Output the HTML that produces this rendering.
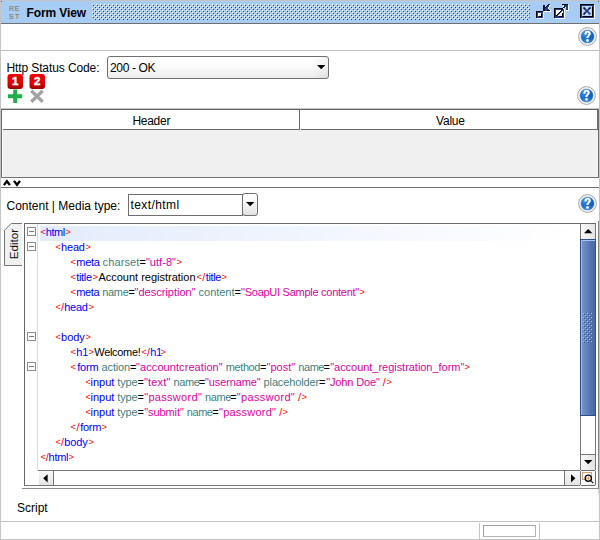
<!DOCTYPE html>
<html>
<head>
<meta charset="utf-8">
<title>Form View</title>
<style>
html,body{margin:0;padding:0;}
body{width:600px;height:540px;overflow:hidden;background:#fff;position:relative;font-family:"Liberation Sans",sans-serif;font-size:12px;color:#000;}
.a{position:absolute;}
.hl{position:absolute;height:1px;}
.vl{position:absolute;width:1px;}
.t{position:absolute;white-space:pre;line-height:14px;}
.code{position:absolute;left:40px;white-space:pre;font-size:11px;line-height:15px;height:15px;letter-spacing:0px;}
.cl{position:absolute;left:0;width:580px;height:15px;font-size:11px;line-height:15px;white-space:pre;}
.cl span{position:absolute;top:0;}
.cl i{display:inline-block;font-style:normal;transform:scale(0.84,0.8);transform-origin:50% 49%;}
.r{color:#ff0000;}
.b{color:#0000ff;}
.at{color:#3f7f7f;}
.v{color:#dd00a4;}
.k{color:#000;}
.fold{position:absolute;left:27px;width:7px;height:7px;border:1px solid #8c8c8c;background:#fff;}
.fold:after{content:"";position:absolute;left:1px;top:3px;width:5px;height:1px;background:#7a7a7a;}
</style>
</head>
<body>
<!-- window borders -->
<div class="a" style="left:0;top:0;width:600px;height:1px;background:#c4c4c4;"></div>
<div class="a" style="left:0;top:0;width:1px;height:540px;background:#c4c4c4;"></div>
<div class="a" style="left:599px;top:0;width:1px;height:540px;background:#c4c4c4;"></div>
<div class="a" style="left:0;top:539px;width:600px;height:1px;background:#c4c4c4;"></div>

<!-- title bar -->
<div class="a" id="titlebar" style="left:1px;top:1px;width:598px;height:22px;background:#a8cdf5;"></div>
<div class="hl" style="left:1px;top:23px;width:598px;background:#707070;"></div>
<div class="a" style="left:1px;top:1px;width:1px;height:1px;background:#4d5b6d;"></div><div class="a" style="left:598px;top:1px;width:1px;height:1px;background:#4d5b6d;"></div>
<svg class="a" style="left:92px;top:4px;" width="438" height="16" shape-rendering="crispEdges">
<defs><pattern id="dots" x="0" y="0" width="4" height="4" patternUnits="userSpaceOnUse">
<rect x="0" y="0" width="1" height="1" fill="#ffffff"/><rect x="1" y="1" width="1" height="1" fill="#233f8f"/>
<rect x="2" y="2" width="1" height="1" fill="#ffffff"/><rect x="3" y="3" width="1" height="1" fill="#233f8f"/>
</pattern></defs>
<rect x="0" y="0" width="438" height="16" fill="url(#dots)"/>
</svg>
<div class="t" id="ttl" style="left:26.5px;top:6px;letter-spacing:-0.1px;font-weight:bold;font-size:12px;">Form View</div>


<!-- REST icon -->
<svg class="a" style="left:8px;top:5px;" width="14" height="15" viewBox="0 0 14 15">
<g font-family="Liberation Sans, sans-serif" font-size="7px" fill="#d2cbc2"><text x="1.6" y="6.4">R</text><text x="7.4" y="6.4">E</text><text x="1.6" y="14.3">S</text><text x="7.6" y="14.3">T</text></g>
<g font-family="Liberation Sans, sans-serif" font-size="7px" fill="#7f7972" stroke="#7f7972" stroke-width="0.15"><text x="0.9" y="5.8">R</text><text x="6.7" y="5.8">E</text><text x="0.9" y="13.7">S</text><text x="6.9" y="13.7">T</text></g>
</svg>

<!-- title buttons -->
<svg class="a" style="left:534px;top:2px;" width="64" height="20" shape-rendering="crispEdges"><rect x="14" y="2" width="1" height="1" fill="#000000"/><rect x="15" y="2" width="1" height="1" fill="#1f3c8e"/><rect x="9" y="3" width="1" height="1" fill="#000000"/><rect x="10" y="3" width="1" height="1" fill="#0d1b47"/><rect x="13" y="3" width="1" height="1" fill="#000000"/><rect x="14" y="3" width="1" height="1" fill="#1f3c8e"/><rect x="15" y="3" width="1" height="1" fill="#ffffff"/><rect x="9" y="4" width="1" height="1" fill="#000000"/><rect x="10" y="4" width="1" height="1" fill="#0d1b47"/><rect x="11" y="4" width="1" height="1" fill="#d9e9fb"/><rect x="12" y="4" width="1" height="1" fill="#000000"/><rect x="13" y="4" width="2" height="1" fill="#1f3c8e"/><rect x="15" y="4" width="1" height="1" fill="#ffffff"/><rect x="9" y="5" width="1" height="1" fill="#000000"/><rect x="10" y="5" width="1" height="1" fill="#0d1b47"/><rect x="11" y="5" width="1" height="1" fill="#000000"/><rect x="12" y="5" width="2" height="1" fill="#1f3c8e"/><rect x="14" y="5" width="1" height="1" fill="#ffffff"/><rect x="9" y="6" width="1" height="1" fill="#000000"/><rect x="10" y="6" width="1" height="1" fill="#0d1b47"/><rect x="11" y="6" width="3" height="1" fill="#1f3c8e"/><rect x="14" y="6" width="1" height="1" fill="#ffffff"/><rect x="9" y="7" width="1" height="1" fill="#000000"/><rect x="10" y="7" width="1" height="1" fill="#0d1b47"/><rect x="11" y="7" width="4" height="1" fill="#1f3c8e"/><rect x="15" y="7" width="1" height="1" fill="#ffffff"/><rect x="9" y="8" width="2" height="1" fill="#000000"/><rect x="11" y="8" width="2" height="1" fill="#1f3c8e"/><rect x="13" y="8" width="3" height="1" fill="#000000"/><rect x="16" y="8" width="1" height="1" fill="#ffffff"/><rect x="2" y="9" width="7" height="1" fill="#000000"/><rect x="10" y="9" width="7" height="1" fill="#ffffff"/><rect x="2" y="10" width="1" height="1" fill="#000000"/><rect x="3" y="10" width="6" height="1" fill="#1f3c8e"/><rect x="9" y="10" width="1" height="1" fill="#ffffff"/><rect x="2" y="11" width="1" height="1" fill="#000000"/><rect x="3" y="11" width="1" height="1" fill="#1f3c8e"/><rect x="4" y="11" width="3" height="1" fill="#ffffff"/><rect x="7" y="11" width="2" height="1" fill="#1f3c8e"/><rect x="9" y="11" width="1" height="1" fill="#ffffff"/><rect x="2" y="12" width="1" height="1" fill="#000000"/><rect x="3" y="12" width="1" height="1" fill="#1f3c8e"/><rect x="4" y="12" width="1" height="1" fill="#ffffff"/><rect x="5" y="12" width="1" height="1" fill="#b7d5f7"/><rect x="6" y="12" width="1" height="1" fill="#ffffff"/><rect x="7" y="12" width="1" height="1" fill="#000000"/><rect x="8" y="12" width="1" height="1" fill="#1f3c8e"/><rect x="9" y="12" width="1" height="1" fill="#ffffff"/><rect x="2" y="13" width="1" height="1" fill="#000000"/><rect x="3" y="13" width="1" height="1" fill="#1f3c8e"/><rect x="4" y="13" width="3" height="1" fill="#ffffff"/><rect x="7" y="13" width="1" height="1" fill="#000000"/><rect x="8" y="13" width="1" height="1" fill="#1f3c8e"/><rect x="9" y="13" width="1" height="1" fill="#ffffff"/><rect x="2" y="14" width="1" height="1" fill="#000000"/><rect x="3" y="14" width="2" height="1" fill="#1f3c8e"/><rect x="5" y="14" width="3" height="1" fill="#000000"/><rect x="8" y="14" width="1" height="1" fill="#1f3c8e"/><rect x="9" y="14" width="1" height="1" fill="#ffffff"/><rect x="2" y="15" width="1" height="1" fill="#000000"/><rect x="3" y="15" width="6" height="1" fill="#1f3c8e"/><rect x="9" y="15" width="1" height="1" fill="#ffffff"/><rect x="3" y="16" width="7" height="1" fill="#ffffff"/><rect x="28" y="2" width="6" height="1" fill="#000000"/><rect x="29" y="3" width="1" height="1" fill="#d9e9fb"/><rect x="30" y="3" width="4" height="1" fill="#1f3c8e"/><rect x="34" y="3" width="1" height="1" fill="#ffffff"/><rect x="29" y="4" width="1" height="1" fill="#ffffff"/><rect x="30" y="4" width="1" height="1" fill="#000000"/><rect x="31" y="4" width="3" height="1" fill="#1f3c8e"/><rect x="34" y="4" width="1" height="1" fill="#ffffff"/><rect x="29" y="5" width="1" height="1" fill="#000000"/><rect x="30" y="5" width="1" height="1" fill="#1f3c8e"/><rect x="31" y="5" width="1" height="1" fill="#ffffff"/><rect x="32" y="5" width="2" height="1" fill="#1f3c8e"/><rect x="34" y="5" width="1" height="1" fill="#ffffff"/><rect x="20" y="6" width="9" height="1" fill="#000000"/><rect x="29" y="6" width="1" height="1" fill="#ffffff"/><rect x="32" y="6" width="2" height="1" fill="#1f3c8e"/><rect x="34" y="6" width="1" height="1" fill="#ffffff"/><rect x="20" y="7" width="1" height="1" fill="#000000"/><rect x="21" y="7" width="7" height="1" fill="#1f3c8e"/><rect x="28" y="7" width="1" height="1" fill="#000000"/><rect x="29" y="7" width="1" height="1" fill="#1f3c8e"/><rect x="30" y="7" width="1" height="1" fill="#ffffff"/><rect x="32" y="7" width="2" height="1" fill="#1f3c8e"/><rect x="34" y="7" width="1" height="1" fill="#ffffff"/><rect x="20" y="8" width="1" height="1" fill="#000000"/><rect x="21" y="8" width="1" height="1" fill="#1f3c8e"/><rect x="22" y="8" width="5" height="1" fill="#ffffff"/><rect x="27" y="8" width="1" height="1" fill="#000000"/><rect x="28" y="8" width="2" height="1" fill="#1f3c8e"/><rect x="30" y="8" width="1" height="1" fill="#ffffff"/><rect x="32" y="8" width="3" height="1" fill="#ffffff"/><rect x="20" y="9" width="1" height="1" fill="#000000"/><rect x="21" y="9" width="1" height="1" fill="#1f3c8e"/><rect x="22" y="9" width="4" height="1" fill="#ffffff"/><rect x="26" y="9" width="1" height="1" fill="#000000"/><rect x="27" y="9" width="1" height="1" fill="#1f3c8e"/><rect x="28" y="9" width="1" height="1" fill="#ffffff"/><rect x="29" y="9" width="1" height="1" fill="#1f3c8e"/><rect x="30" y="9" width="1" height="1" fill="#ffffff"/><rect x="20" y="10" width="1" height="1" fill="#000000"/><rect x="21" y="10" width="1" height="1" fill="#1f3c8e"/><rect x="22" y="10" width="3" height="1" fill="#ffffff"/><rect x="25" y="10" width="1" height="1" fill="#000000"/><rect x="26" y="10" width="1" height="1" fill="#1f3c8e"/><rect x="27" y="10" width="2" height="1" fill="#ffffff"/><rect x="29" y="10" width="1" height="1" fill="#1f3c8e"/><rect x="30" y="10" width="1" height="1" fill="#ffffff"/><rect x="20" y="11" width="1" height="1" fill="#000000"/><rect x="21" y="11" width="1" height="1" fill="#1f3c8e"/><rect x="22" y="11" width="2" height="1" fill="#ffffff"/><rect x="24" y="11" width="1" height="1" fill="#000000"/><rect x="25" y="11" width="1" height="1" fill="#1f3c8e"/><rect x="26" y="11" width="1" height="1" fill="#ffffff"/><rect x="27" y="11" width="1" height="1" fill="#d9e9fb"/><rect x="28" y="11" width="1" height="1" fill="#000000"/><rect x="29" y="11" width="1" height="1" fill="#1f3c8e"/><rect x="30" y="11" width="1" height="1" fill="#ffffff"/><rect x="20" y="12" width="1" height="1" fill="#000000"/><rect x="21" y="12" width="1" height="1" fill="#1f3c8e"/><rect x="22" y="12" width="1" height="1" fill="#ffffff"/><rect x="23" y="12" width="1" height="1" fill="#000000"/><rect x="24" y="12" width="1" height="1" fill="#1f3c8e"/><rect x="25" y="12" width="1" height="1" fill="#ffffff"/><rect x="26" y="12" width="2" height="1" fill="#d9e9fb"/><rect x="28" y="12" width="1" height="1" fill="#000000"/><rect x="29" y="12" width="1" height="1" fill="#1f3c8e"/><rect x="30" y="12" width="1" height="1" fill="#ffffff"/><rect x="20" y="13" width="1" height="1" fill="#000000"/><rect x="21" y="13" width="1" height="1" fill="#1f3c8e"/><rect x="22" y="13" width="1" height="1" fill="#000000"/><rect x="23" y="13" width="1" height="1" fill="#1f3c8e"/><rect x="24" y="13" width="1" height="1" fill="#ffffff"/><rect x="25" y="13" width="3" height="1" fill="#d9e9fb"/><rect x="28" y="13" width="1" height="1" fill="#000000"/><rect x="29" y="13" width="1" height="1" fill="#1f3c8e"/><rect x="30" y="13" width="1" height="1" fill="#ffffff"/><rect x="20" y="14" width="1" height="1" fill="#000000"/><rect x="21" y="14" width="4" height="1" fill="#1f3c8e"/><rect x="25" y="14" width="4" height="1" fill="#000000"/><rect x="29" y="14" width="1" height="1" fill="#1f3c8e"/><rect x="30" y="14" width="1" height="1" fill="#ffffff"/><rect x="20" y="15" width="1" height="1" fill="#000000"/><rect x="21" y="15" width="9" height="1" fill="#1f3c8e"/><rect x="30" y="15" width="1" height="1" fill="#ffffff"/><rect x="21" y="16" width="10" height="1" fill="#ffffff"/><rect x="46" y="2" width="14" height="1" fill="#000000"/><rect x="46" y="3" width="1" height="1" fill="#000000"/><rect x="47" y="3" width="13" height="1" fill="#1f3c8e"/><rect x="60" y="3" width="1" height="1" fill="#ffffff"/><rect x="46" y="4" width="1" height="1" fill="#000000"/><rect x="47" y="4" width="1" height="1" fill="#1f3c8e"/><rect x="48" y="4" width="10" height="1" fill="#b7d5f7"/><rect x="58" y="4" width="2" height="1" fill="#1f3c8e"/><rect x="60" y="4" width="1" height="1" fill="#ffffff"/><rect x="46" y="5" width="1" height="1" fill="#000000"/><rect x="47" y="5" width="1" height="1" fill="#1f3c8e"/><rect x="48" y="5" width="10" height="1" fill="#b7d5f7"/><rect x="58" y="5" width="1" height="1" fill="#000000"/><rect x="59" y="5" width="1" height="1" fill="#1f3c8e"/><rect x="60" y="5" width="1" height="1" fill="#ffffff"/><rect x="46" y="6" width="1" height="1" fill="#000000"/><rect x="47" y="6" width="1" height="1" fill="#1f3c8e"/><rect x="48" y="6" width="10" height="1" fill="#b7d5f7"/><rect x="58" y="6" width="1" height="1" fill="#000000"/><rect x="59" y="6" width="1" height="1" fill="#1f3c8e"/><rect x="60" y="6" width="1" height="1" fill="#ffffff"/><rect x="46" y="7" width="1" height="1" fill="#000000"/><rect x="47" y="7" width="1" height="1" fill="#1f3c8e"/><rect x="48" y="7" width="10" height="1" fill="#b7d5f7"/><rect x="58" y="7" width="1" height="1" fill="#000000"/><rect x="59" y="7" width="1" height="1" fill="#1f3c8e"/><rect x="60" y="7" width="1" height="1" fill="#ffffff"/><rect x="46" y="8" width="1" height="1" fill="#000000"/><rect x="47" y="8" width="1" height="1" fill="#1f3c8e"/><rect x="48" y="8" width="10" height="1" fill="#b7d5f7"/><rect x="58" y="8" width="1" height="1" fill="#000000"/><rect x="59" y="8" width="1" height="1" fill="#1f3c8e"/><rect x="60" y="8" width="1" height="1" fill="#ffffff"/><rect x="46" y="9" width="1" height="1" fill="#000000"/><rect x="47" y="9" width="1" height="1" fill="#1f3c8e"/><rect x="48" y="9" width="10" height="1" fill="#b7d5f7"/><rect x="58" y="9" width="1" height="1" fill="#000000"/><rect x="59" y="9" width="1" height="1" fill="#1f3c8e"/><rect x="60" y="9" width="1" height="1" fill="#ffffff"/><rect x="46" y="10" width="1" height="1" fill="#000000"/><rect x="47" y="10" width="1" height="1" fill="#1f3c8e"/><rect x="48" y="10" width="10" height="1" fill="#b7d5f7"/><rect x="58" y="10" width="1" height="1" fill="#000000"/><rect x="59" y="10" width="1" height="1" fill="#1f3c8e"/><rect x="60" y="10" width="1" height="1" fill="#ffffff"/><rect x="46" y="11" width="1" height="1" fill="#000000"/><rect x="47" y="11" width="1" height="1" fill="#1f3c8e"/><rect x="48" y="11" width="10" height="1" fill="#b7d5f7"/><rect x="58" y="11" width="1" height="1" fill="#000000"/><rect x="59" y="11" width="1" height="1" fill="#1f3c8e"/><rect x="60" y="11" width="1" height="1" fill="#ffffff"/><rect x="46" y="12" width="1" height="1" fill="#000000"/><rect x="47" y="12" width="1" height="1" fill="#1f3c8e"/><rect x="48" y="12" width="10" height="1" fill="#b7d5f7"/><rect x="58" y="12" width="1" height="1" fill="#000000"/><rect x="59" y="12" width="1" height="1" fill="#1f3c8e"/><rect x="60" y="12" width="1" height="1" fill="#ffffff"/><rect x="46" y="13" width="1" height="1" fill="#000000"/><rect x="47" y="13" width="1" height="1" fill="#1f3c8e"/><rect x="48" y="13" width="10" height="1" fill="#b7d5f7"/><rect x="58" y="13" width="1" height="1" fill="#000000"/><rect x="59" y="13" width="1" height="1" fill="#1f3c8e"/><rect x="60" y="13" width="1" height="1" fill="#ffffff"/><rect x="46" y="14" width="1" height="1" fill="#000000"/><rect x="47" y="14" width="2" height="1" fill="#1f3c8e"/><rect x="49" y="14" width="10" height="1" fill="#000000"/><rect x="59" y="14" width="1" height="1" fill="#1f3c8e"/><rect x="60" y="14" width="1" height="1" fill="#ffffff"/><rect x="46" y="15" width="1" height="1" fill="#000000"/><rect x="47" y="15" width="13" height="1" fill="#1f3c8e"/><rect x="60" y="15" width="1" height="1" fill="#ffffff"/><rect x="47" y="16" width="14" height="1" fill="#ffffff"/></svg>
<svg class="a" style="left:582px;top:6px;" width="10" height="10" viewBox="0 0 10 10"><path d="M2.6 2.6 L7.4 7.4 M7.6 2.4 L2.4 7.6" stroke="#fff" stroke-width="1.6" fill="none" transform="translate(0.9,0.5)" opacity="0.9"/><path d="M1.7 1.7 L8.3 8.3 M8.3 1.7 L1.7 8.3" stroke="#1f3c8e" stroke-width="1.9" fill="none"/><path d="M1.5 1.5 L3 3 M8.5 1.5 L7 3 M1.5 8.5 L3 7" stroke="#000" stroke-width="1.1" fill="none" opacity="0.8"/><rect x="4" y="4" width="2" height="2" fill="#1f3c8e"/></svg>

<!-- section lines -->
<div class="hl" style="left:1px;top:50px;width:598px;background:#c0c0c0;"></div>
<div class="hl" style="left:1px;top:187px;width:598px;background:#737373;"></div>
<div class="hl" style="left:1px;top:521px;width:598px;background:#c4c4c4;"></div>


<!-- help icons -->
<svg width="0" height="0" style="position:absolute"><defs>
<radialGradient id="hg" cx="0.35" cy="0.25" r="0.9"><stop offset="0" stop-color="#4a9cec"/><stop offset="0.55" stop-color="#1565c0"/><stop offset="1" stop-color="#0a4a9a"/></radialGradient>
<linearGradient id="hg2" x1="0" y1="0" x2="0" y2="1"><stop offset="0.55" stop-color="#2a7fd8" stop-opacity="0"/><stop offset="1" stop-color="#4aa0ee" stop-opacity="0.9"/></linearGradient>
<g id="help"><circle cx="9.5" cy="9.5" r="8.9" fill="#ececec" stroke="#a6a6a6" stroke-width="1"/><circle cx="9.5" cy="9.5" r="7.5" fill="none" stroke="#f8f8f8" stroke-width="0.9"/><circle cx="9.5" cy="9.5" r="6.6" fill="url(#hg)" stroke="#6f9bd2" stroke-width="0.5"/><circle cx="9.5" cy="9.5" r="6.4" fill="url(#hg2)"/>
<g transform="translate(9.5,9.3) scale(1.12) translate(-9.5,-9.3)"><path d="M6.8 7.6 C6.8 5.3 8.1 4.4 9.6 4.4 C11.3 4.4 12.4 5.4 12.4 6.9 C12.4 8.1 11.7 8.7 11 9.3 C10.5 9.8 10.4 10.1 10.4 10.9 L8.6 10.9 C8.6 9.8 8.8 9.3 9.5 8.7 C10.1 8.1 10.4 7.7 10.4 7 C10.4 6.4 10.1 6 9.6 6 C9 6 8.7 6.5 8.7 7.6 Z" fill="#fff"/><circle cx="9.5" cy="13" r="1.2" fill="#fff"/></g></g>
</defs></svg>
<svg class="a" style="left:578px;top:27px;" width="19" height="19"><use href="#help"/></svg>
<svg class="a" style="left:577px;top:86px;" width="19" height="19"><use href="#help"/></svg>
<svg class="a" style="left:578px;top:194px;" width="19" height="19"><use href="#help"/></svg>

<!-- status combobox -->
<div class="a" style="left:107px;top:56px;width:220px;height:21px;border:1px solid #707070;border-radius:3px;background:linear-gradient(90deg,rgba(0,0,0,0) 92%,rgba(0,0,0,0.045) 100%),linear-gradient(#ffffff 0%,#fbfbfb 45%,#ececec 100%);"></div>
<div class="t" id="cb1" style="left:110px;top:61px;letter-spacing:-0.35px;">200 - OK</div>
<svg class="a" style="left:317px;top:65px;" width="9" height="5"><path d="M0 0 L8.4 0 L4.2 4.3 Z" fill="#000"/></svg>

<!-- badges -->
<svg width="0" height="0" style="position:absolute"><defs>
<linearGradient id="bg" x1="0" y1="0" x2="0" y2="1"><stop offset="0" stop-color="#ee0202"/><stop offset="0.6" stop-color="#e00000"/><stop offset="0.8" stop-color="#c00000"/><stop offset="1" stop-color="#980000"/></linearGradient></defs></svg>
<svg class="a" style="left:7px;top:73.7px;" width="16" height="16"><rect x="0.5" y="0" width="15.5" height="15" rx="3" ry="3" fill="url(#bg)"/><text x="8.1" y="11.1" text-anchor="middle" font-family="Liberation Sans, sans-serif" font-weight="bold" font-size="11.5px" fill="#fff" stroke="#fff" stroke-width="0.45">1</text></svg>
<svg class="a" style="left:29px;top:73.7px;" width="16" height="16"><rect x="0.5" y="0" width="15.5" height="15" rx="3" ry="3" fill="url(#bg)"/><text x="8.1" y="11.1" text-anchor="middle" font-family="Liberation Sans, sans-serif" font-weight="bold" font-size="11.5px" fill="#fff" stroke="#fff" stroke-width="0.45">2</text></svg>

<!-- plus / x -->
<svg class="a" style="left:8px;top:89px;" width="15" height="15"><path d="M5.2 0.4 H9.2 V5.3 H14.2 V9.3 H9.2 V13.9 H5.2 V9.3 H0 V5.3 H5.2 Z" fill="#22ad4b"/></svg>
<svg class="a" style="left:29px;top:89px;" width="16" height="15"><path d="M2.3 1.8 L13.7 12.8 M13.7 1.8 L2.3 12.8" stroke="#a3a3a3" stroke-width="3.3" fill="none"/></svg>

<!-- table -->
<div class="hl" style="left:1px;top:108px;width:598px;background:#c6c6c6;"></div>
<div class="hl" style="left:1px;top:109px;width:598px;background:#646464;"></div>
<div class="vl" style="left:1px;top:109px;height:69px;background:#6a6a6a;"></div>
<div class="vl" style="left:598px;top:109px;height:69px;background:#6e6e6e;"></div>
<div class="a" style="left:3px;top:130px;width:595px;height:47px;background:#f0f0f0;"></div>
<div class="hl" style="left:3px;top:129px;width:297px;background:#6a6a6a;"></div>
<div class="hl" style="left:301px;top:129px;width:297px;background:#6a6a6a;"></div>
<div class="vl" style="left:299px;top:110px;height:20px;background:#6a6a6a;"></div>
<div class="vl" style="left:597px;top:110px;height:20px;background:#6a6a6a;"></div>
<div class="hl" style="left:1px;top:177px;width:598px;background:#707070;"></div>
<div class="t" id="th1" style="left:132.4px;top:114px;letter-spacing:-0.27px;">Header</div>
<div class="t" id="th2" style="left:436px;top:114px;letter-spacing:-0.2px;">Value</div>

<!-- splitter arrows -->
<svg class="a" style="left:3px;top:179px;" width="19" height="8"><path d="M0.9 6.1 L3.9 2.2 L6.9 6.1" stroke="#000" stroke-width="2.3" fill="none" stroke-linejoin="miter"/><path d="M11 1.9 L14 5.8 L17 1.9" stroke="#000" stroke-width="2.3" fill="none" stroke-linejoin="miter"/></svg>

<!-- media type combobox -->
<div class="a" style="left:128px;top:194px;width:113px;height:20px;border:1px solid #6f6f6f;background:#fff;"></div>
<div class="a" style="left:242px;top:193px;width:14px;height:21px;border:1px solid #6f6f6f;border-radius:3px;background:linear-gradient(#ffffff 0%,#f6f6f6 45%,#e2e2e2 100%);"></div>
<svg class="a" style="left:246px;top:202px;" width="9" height="5"><path d="M0 0 L8.4 0 L4.2 4.3 Z" fill="#000"/></svg>
<div class="t" id="cb2" style="left:130.5px;top:198px;letter-spacing:0.4px;">text/html</div>

<!-- editor tab -->
<svg class="a" style="left:3px;top:222px;" width="22" height="45"><path d="M19 1.5 L8.2 1.5 L1.5 8.2 L1.5 43.5 L19 43.5 Z" fill="#f0f0f0" stroke="none"/><path d="M19 1.5 L8.2 1.5 L1.5 8.2 L1.5 43.5 L19 43.5" fill="none" stroke="#757575" stroke-width="1"/></svg>
<div class="a" id="edtab" style="left:4px;top:228px;width:18px;height:34px;"><div style="position:absolute;left:-7.3px;top:9.2px;width:34px;height:14px;line-height:14px;text-align:center;transform:rotate(-90deg);font-size:11.6px;white-space:pre;color:#111;">Editor</div></div>

<!-- editor frame -->
<div class="hl" style="left:24px;top:223px;width:572px;background:#6a6a6a;"></div>
<div class="vl" style="left:24px;top:223px;height:263px;background:#666666;"></div>
<div class="hl" style="left:24px;top:485px;width:572px;background:#767676;"></div>
<div class="vl" style="left:598px;top:221px;height:268px;background:#808080;"></div>
<div class="vl" style="left:598px;top:489px;height:5px;background:#d4d4d4;"></div>
<div class="hl" style="left:22px;top:488px;width:577px;background:#8c8c8c;"></div>
<div class="vl" style="left:37px;top:224px;height:247px;background:#dcdcdc;"></div>
<!-- current line highlight -->
<div class="a" style="left:40px;top:226px;width:540px;height:15px;background:linear-gradient(90deg,#e3ebfb 0%,#ffffff 100%);"></div>
<!--CODE-->
<div class="cl" id="L0" style="top:225px"><span class="r" style="left:39.8px;letter-spacing:-0.424px"><i>&lt;</i></span><span class="b" style="left:45.8px;letter-spacing:-0.450px">html</span><span class="r" style="left:64.6px;letter-spacing:-0.024px"><i>&gt;</i></span></div>
<div class="fold" style="top:227px;"></div>
<div class="cl" id="L1" style="top:240px"><span class="r" style="left:54.7px;letter-spacing:-0.024px"><i>&lt;</i></span><span class="b" style="left:61.1px;letter-spacing:-0.193px">head</span><span class="r" style="left:84.8px;letter-spacing:-0.224px"><i>&gt;</i></span></div>
<div class="fold" style="top:242px;"></div>
<div class="cl" id="L2" style="top:255px"><span class="r" style="left:70.0px;letter-spacing:-0.124px"><i>&lt;</i></span><span class="b" style="left:76.3px;letter-spacing:-0.289px">meta</span><span class="at" style="left:102.6px;letter-spacing:0.104px">charset</span><span class="k" style="left:139.4px;letter-spacing:0.076px">=</span><span class="v" style="left:145.9px;letter-spacing:0.040px">"utf-8"</span><span class="r" style="left:176.0px;letter-spacing:-0.024px"><i>&gt;</i></span></div>
<div class="cl" id="L3" style="top:270px"><span class="r" style="left:70.0px;letter-spacing:-0.224px"><i>&lt;</i></span><span class="b" style="left:76.2px;letter-spacing:-0.304px">title</span><span class="r" style="left:91.8px;letter-spacing:0.176px"><i>&gt;</i></span><span class="k" style="left:98.4px;letter-spacing:-0.006px">Account registration</span><span class="r" style="left:195.5px;letter-spacing:0.410px"><i>&lt;</i>/</span><span class="b" style="left:205.8px;letter-spacing:-0.384px">title</span><span class="r" style="left:221.0px;letter-spacing:-0.424px"><i>&gt;</i></span></div>
<div class="cl" id="L4" style="top:285px"><span class="r" style="left:70.0px;letter-spacing:-0.124px"><i>&lt;</i></span><span class="b" style="left:76.3px;letter-spacing:-0.364px">meta</span><span class="at" style="left:102.3px;letter-spacing:-0.354px">name</span><span class="k" style="left:128.4px;letter-spacing:-0.324px">=</span><span class="v" style="left:134.5px;letter-spacing:0.007px">"description"</span><span class="at" style="left:198.6px;letter-spacing:-0.040px">content</span><span class="k" style="left:234.4px;letter-spacing:0.276px">=</span><span class="v" style="left:241.1px;letter-spacing:-0.265px">"SoapUI Sample content"</span><span class="r" style="left:359.0px;letter-spacing:-0.424px"><i>&gt;</i></span></div>
<div class="cl" id="L5" style="top:300px"><span class="r" style="left:54.5px;letter-spacing:0.160px"><i>&lt;</i>/</span><span class="b" style="left:64.3px;letter-spacing:-0.318px">head</span><span class="r" style="left:87.5px;letter-spacing:0.176px"><i>&gt;</i></span></div>
<div class="cl" id="L7" style="top:330px"><span class="r" style="left:54.7px;letter-spacing:-0.024px"><i>&lt;</i></span><span class="b" style="left:61.1px;letter-spacing:-0.038px">body</span><span class="r" style="left:84.8px;letter-spacing:-0.224px"><i>&gt;</i></span></div>
<div class="fold" style="top:332px;"></div>
<div class="cl" id="L8" style="top:345px"><span class="r" style="left:70.0px;letter-spacing:-0.124px"><i>&lt;</i></span><span class="b" style="left:76.3px;letter-spacing:-0.068px">h1</span><span class="r" style="left:88.4px;letter-spacing:-0.450px"><i>&gt;</i></span><span class="k" style="left:94.3px;letter-spacing:-0.312px">Welcome!</span><span class="r" style="left:140.5px;letter-spacing:0.160px"><i>&lt;</i>/</span><span class="b" style="left:150.3px;letter-spacing:-0.450px">h1</span><span class="r" style="left:160.4px;letter-spacing:-0.424px"><i>&gt;</i></span></div>
<div class="cl" id="L9" style="top:360px"><span class="r" style="left:70.0px;letter-spacing:0.450px"><i>&lt;</i></span><span class="b" style="left:77.2px;letter-spacing:-0.150px">form</span><span class="at" style="left:101.6px;letter-spacing:-0.159px">action</span><span class="k" style="left:130.0px;letter-spacing:-0.324px">=</span><span class="v" style="left:136.1px;letter-spacing:0.072px">"accountcreation"</span><span class="at" style="left:225.8px;letter-spacing:-0.415px">method</span><span class="k" style="left:260.0px;letter-spacing:0.076px">=</span><span class="v" style="left:266.5px;letter-spacing:0.033px">"post"</span><span class="at" style="left:298.3px;letter-spacing:-0.450px">name</span><span class="k" style="left:323.4px;letter-spacing:0.376px">=</span><span class="v" style="left:330.2px;letter-spacing:-0.033px">"account_registration_form"</span><span class="r" style="left:464.3px;letter-spacing:0.450px"><i>&gt;</i></span></div>
<div class="fold" style="top:362px;"></div>
<div class="cl" id="L10" style="top:375px"><span class="r" style="left:85.0px;letter-spacing:-0.450px"><i>&lt;</i></span><span class="b" style="left:90.5px;letter-spacing:-0.011px">input</span><span class="at" style="left:117.3px;letter-spacing:-0.173px">type</span><span class="k" style="left:137.4px;letter-spacing:0.176px">=</span><span class="v" style="left:144.0px;letter-spacing:0.177px">"text"</span><span class="at" style="left:173.6px;letter-spacing:-0.450px">name</span><span class="k" style="left:198.7px;letter-spacing:-0.124px">=</span><span class="v" style="left:205.0px;letter-spacing:-0.112px">"username"</span><span class="at" style="left:263.6px;letter-spacing:-0.134px">placeholder</span><span class="k" style="left:319.0px;letter-spacing:0.450px">=</span><span class="v" style="left:326.2px;letter-spacing:-0.140px">"John Doe"</span><span class="r" style="left:382.7px;letter-spacing:0.010px">/<i>&gt;</i></span></div>
<div class="cl" id="L11" style="top:390px"><span class="r" style="left:85.0px;letter-spacing:-0.450px"><i>&lt;</i></span><span class="b" style="left:90.5px;letter-spacing:-0.011px">input</span><span class="at" style="left:117.3px;letter-spacing:-0.173px">type</span><span class="k" style="left:137.4px;letter-spacing:0.376px">=</span><span class="v" style="left:144.2px;letter-spacing:0.301px">"password"</span><span class="at" style="left:205.1px;letter-spacing:-0.450px">name</span><span class="k" style="left:230.2px;letter-spacing:0.176px">=</span><span class="v" style="left:236.8px;letter-spacing:0.341px">"password"</span><span class="r" style="left:298.1px;letter-spacing:-0.290px">/<i>&gt;</i></span></div>
<div class="cl" id="L12" style="top:405px"><span class="r" style="left:85.0px;letter-spacing:-0.450px"><i>&lt;</i></span><span class="b" style="left:90.5px;letter-spacing:-0.011px">input</span><span class="at" style="left:117.3px;letter-spacing:-0.173px">type</span><span class="k" style="left:137.4px;letter-spacing:0.376px">=</span><span class="v" style="left:144.2px;letter-spacing:-0.076px">"submit"</span><span class="at" style="left:186.8px;letter-spacing:-0.450px">name</span><span class="k" style="left:212.2px;letter-spacing:0.376px">=</span><span class="v" style="left:219.0px;letter-spacing:0.231px">"password"</span><span class="r" style="left:279.2px;letter-spacing:-0.340px">/<i>&gt;</i></span></div>
<div class="cl" id="L13" style="top:420px"><span class="r" style="left:69.5px;letter-spacing:0.450px"><i>&lt;</i>/</span><span class="b" style="left:80.2px;letter-spacing:-0.250px">form</span><span class="r" style="left:101.2px;letter-spacing:-0.450px"><i>&gt;</i></span></div>
<div class="cl" id="L14" style="top:435px"><span class="r" style="left:54.5px;letter-spacing:0.160px"><i>&lt;</i>/</span><span class="b" style="left:64.3px;letter-spacing:-0.163px">body</span><span class="r" style="left:87.5px;letter-spacing:0.176px"><i>&gt;</i></span></div>
<div class="cl" id="L15" style="top:450px"><span class="r" style="left:39.5px;letter-spacing:-0.190px"><i>&lt;</i>/</span><span class="b" style="left:48.6px;letter-spacing:-0.295px">html</span><span class="r" style="left:68.2px;letter-spacing:-0.124px"><i>&gt;</i></span></div>
<!--/CODE-->
<!-- vertical scrollbar -->
<div class="a" style="left:580px;top:224px;width:16px;height:246px;background:#fff;"></div>
<div class="vl" style="left:580px;top:224px;height:247px;background:#767676;"></div>
<div class="vl" style="left:595px;top:224px;height:247px;background:#767676;"></div>
<div class="a" style="left:581px;top:224px;width:14px;height:15px;background:linear-gradient(90deg,#f8f8f8,#e4e4e4);"></div>
<svg class="a" style="left:584px;top:228.6px;" width="9" height="5"><path d="M0 4.3 L8.4 4.3 L4.2 0 Z" fill="#000"/></svg>
<div class="a" style="left:580px;top:239px;width:16px;height:177px;background:linear-gradient(90deg,#7c9ad0 0%,#6a89c2 30%,#5573b0 65%,#4866a3 100%);"></div>
<div class="hl" style="left:580px;top:239px;width:16px;background:#2a4a8e;"></div>
<div class="hl" style="left:581px;top:240px;width:14px;background:#a6c5f2;"></div>
<div class="vl" style="left:580px;top:239px;height:177px;background:#2a4a8e;"></div>
<div class="vl" style="left:581px;top:240px;height:175px;background:#9bbbe9;"></div>
<div class="vl" style="left:595px;top:239px;height:177px;background:#2f4e90;"></div>
<div class="hl" style="left:580px;top:415px;width:16px;background:#2a4a8e;"></div>
<svg class="a" style="left:583px;top:313px;" width="11" height="30" shape-rendering="crispEdges"><defs><pattern id="grip" x="0" y="0" width="4" height="4" patternUnits="userSpaceOnUse"><rect x="0" y="0" width="1" height="1" fill="#a9c0ea"/><rect x="1" y="1" width="1" height="1" fill="#3f5d9c"/><rect x="2" y="2" width="1" height="1" fill="#a9c0ea"/><rect x="3" y="3" width="1" height="1" fill="#3f5d9c"/></pattern></defs><rect x="0" y="0" width="10" height="30" fill="url(#grip)"/></svg>
<div class="hl" style="left:581px;top:454px;width:14px;background:#767676;"></div>
<div class="a" style="left:581px;top:455px;width:14px;height:15px;background:linear-gradient(90deg,#f8f8f8,#e4e4e4);"></div>
<svg class="a" style="left:584px;top:460px;" width="9" height="5"><path d="M0 0 L8.4 0 L4.2 4.3 Z" fill="#000"/></svg>

<!-- horizontal scrollbar -->
<div class="hl" style="left:38px;top:470px;width:558px;background:#767676;"></div>
<div class="a" style="left:38px;top:471px;width:542px;height:14px;background:#fff;"></div>
<div class="a" style="left:39px;top:471px;width:14px;height:14px;background:linear-gradient(#f8f8f8,#e4e4e4);"></div>
<div class="vl" style="left:53px;top:471px;height:14px;background:#747474;"></div>
<svg class="a" style="left:42.5px;top:473.7px;" width="6" height="9"><path d="M4.6 0.2 L4.6 8.4 L0.2 4.3 Z" fill="#000"/></svg>
<div class="vl" style="left:564px;top:471px;height:14px;background:#767676;"></div>
<div class="a" style="left:565px;top:471px;width:15px;height:14px;background:linear-gradient(#f8f8f8,#e4e4e4);"></div>
<svg class="a" style="left:571px;top:474px;" width="6" height="9"><path d="M0 0.2 L0 8.4 L4.4 4.3 Z" fill="#000"/></svg>
<!-- corner zoom icon -->
<div class="a" style="left:580px;top:470px;width:14px;height:14px;border:1px solid #6e6e6e;background:linear-gradient(135deg,#ffffff 30%,#ececec 100%);"></div>
<div class="a" style="left:580px;top:470px;width:1px;height:1px;background:#f4f4f4;"></div><div class="a" style="left:595px;top:470px;width:1px;height:1px;background:#f4f4f4;"></div><div class="a" style="left:580px;top:485px;width:1px;height:1px;background:#f4f4f4;"></div><div class="a" style="left:595px;top:485px;width:1px;height:1px;background:#f4f4f4;"></div>
<svg class="a" style="left:581px;top:471px;" width="14" height="14"><rect x="1.5" y="1.5" width="9" height="7" fill="none" stroke="#d6a06a" stroke-width="1"/><circle cx="7.3" cy="7.2" r="3.1" fill="#fff" stroke="#0a0a0a" stroke-width="1.4"/><path d="M7.3 5.2 V9.2 M5.3 7.2 H9.3" stroke="#dc9a58" stroke-width="1.1"/><path d="M9.7 9.6 L12.3 12.2" stroke="#111" stroke-width="1.1"/></svg>

<!-- status bar -->
<div class="vl" style="left:479px;top:523px;height:16px;background:#c4c4c4;"></div>
<div class="vl" style="left:539px;top:523px;height:16px;background:#c4c4c4;"></div>
<div class="a" style="left:483px;top:525px;width:51px;height:10px;border:1px solid #b4b4b4;border-top-color:#a0a0a0;border-left-color:#a0a0a0;background:#fff;"></div>

<!-- labels -->
<div class="t" id="lbl1" style="left:6.4px;top:61px;letter-spacing:-0.1px;">Http Status Code:</div>
<div class="t" id="lbl2" style="left:6.5px;top:199px;">Content | Media type:</div>
<div class="t" id="lbl3" style="left:17px;top:501px;">Script</div>

</body>
</html>
